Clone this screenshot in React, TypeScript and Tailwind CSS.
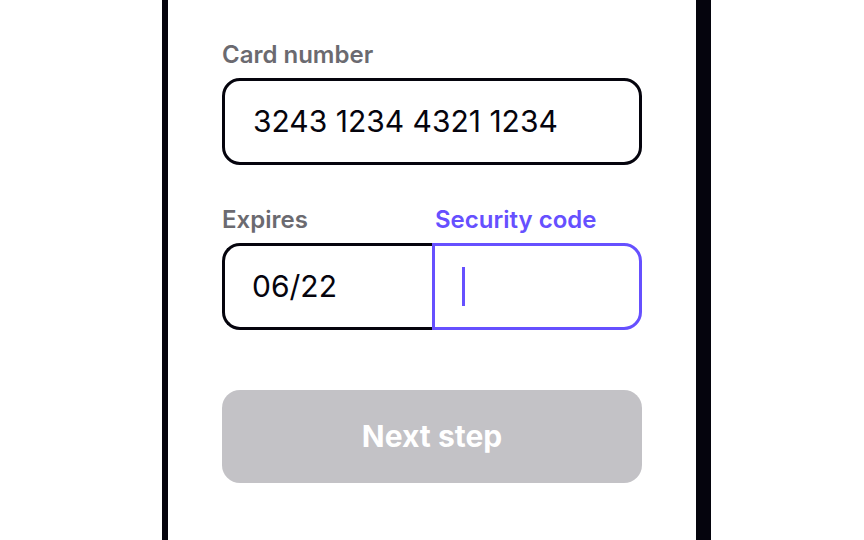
import React, { useState } from "react";

export default function App() {
  const [card, setCard] = useState("3243 1234 4321 1234");
  const [expires, setExpires] = useState("06/22");
  const [code, setCode] = useState("");

  return (
    <main className="flex min-h-screen justify-center bg-white pr-px font-['Inter',sans-serif] text-[#05040d]">
      <form
        className="ml-2.5 w-full max-w-[549px] border-r-[15px] border-l-[6px] border-[#05040d] bg-white px-[54px] pt-10"
        onSubmit={(e) => e.preventDefault()}
      >
        <div className="flex flex-col gap-2">
          <label htmlFor="card" className="text-2xl leading-[30px] font-semibold text-[#6b6a70]">
            Card number
          </label>
          <input
            id="card"
            value={card}
            onChange={(e) => setCard(e.target.value)}
            className="h-[87px] w-full rounded-[18px] border-3 border-[#05040d] px-7 pb-0.5 text-[30px] outline-none"
          />
        </div>

        <div className="mt-10 grid grid-cols-2">
          <div className="flex flex-col gap-2">
            <label htmlFor="expires" className="text-2xl leading-[30px] font-semibold text-[#6b6a70]">
              Expires
            </label>
            <input
              id="expires"
              value={expires}
              onChange={(e) => setExpires(e.target.value)}
              className="h-[87px] w-full rounded-l-[18px] border-3 border-r-0 border-[#05040d] px-[27px] pb-0.5 text-[30px] outline-none"
            />
          </div>
          <div className="flex flex-col gap-2">
            <label htmlFor="code" className="pl-[3px] text-2xl leading-[30px] font-semibold text-[#6650ff]">
              Security code
            </label>
            <div className="flex h-[87px] items-center rounded-r-[18px] border-3 border-[#6650ff] pl-[27px]">
              <span className="h-[39px] w-[3px] shrink-0 bg-[#6650ff]" />
              <input
                id="code"
                value={code}
                onChange={(e) => setCode(e.target.value)}
                className="h-full w-full min-w-0 rounded-r-[18px] px-1 text-[30px] caret-transparent outline-none"
              />
            </div>
          </div>
        </div>

        <button type="submit" className="mt-[60px] h-[93px] w-full rounded-[18px] bg-[#c3c2c6] text-[30px] font-bold text-white">
          Next step
        </button>
      </form>
    </main>
  );
}
